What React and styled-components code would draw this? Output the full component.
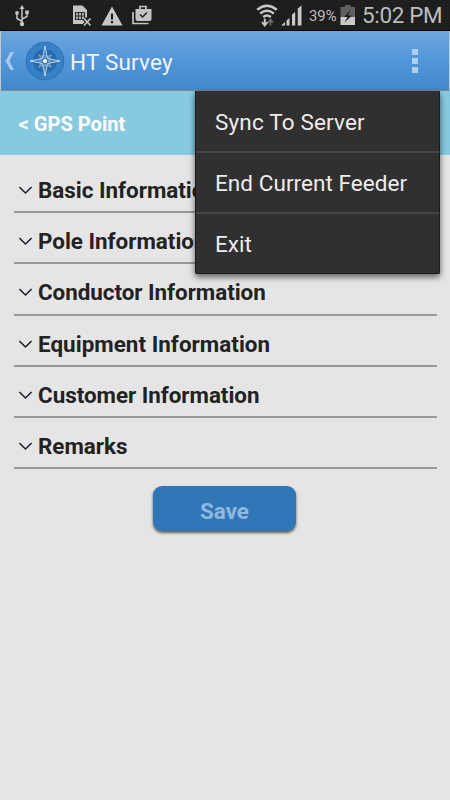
import styled, { createGlobalStyle } from 'styled-components';

const sections = [
  { title: 'Basic Information', spacing: '0px' },
  { title: 'Pole Information', spacing: '0px' },
  { title: 'Conductor Information', spacing: '-0.03px' },
  { title: 'Equipment Information', spacing: '0.04px' },
  { title: 'Customer Information', spacing: '-0.02px' },
  { title: 'Remarks', spacing: '0px' },
];

const menuItems = [
  { label: 'Sync To Server', spacing: '0.16px' },
  { label: 'End Current Feeder', spacing: '0.06px' },
  { label: 'Exit', spacing: '0px' },
];

function UsbIcon() {
  return (
    <svg width="16" height="24" viewBox="0 0 16 24" fill="none" stroke="#c4c4c4" strokeWidth="1.5">
      <path d="M8 4v15M8 17.5L3 14.500V10M8 15l5-2.500V9" />
      <path d="M8 1L10.500 5H5.500z" fill="#c4c4c4" stroke="none" />
      <circle cx="8" cy="20" r="2.200" fill="#c4c4c4" stroke="none" />
      <circle cx="3" cy="9" r="1.900" fill="#c4c4c4" stroke="none" />
      <rect x="11.200" y="6.500" width="3.600" height="3.600" fill="#c4c4c4" stroke="none" />
    </svg>
  );
}

function SimIcon() {
  return (
    <svg width="20" height="22" viewBox="0 0 20 22">
      <path d="M1 .5h9.500l4.500 4.500v7l-3 3 1 4H1z" fill="#c4c4c4" />
      <path d="M3.500 7.500h9v7h-9zM3.500 11h9M6.500 7.500v7M9.500 7.500v7" fill="none" stroke="#2a2a2a" strokeWidth="1.200" />
      <path d="M12 13.500l6.500 7M18.500 13.500l-6.500 7" stroke="#1e1e1e" strokeWidth="4" />
      <path d="M12 13.500l6.500 7M18.500 13.500l-6.500 7" stroke="#c4c4c4" strokeWidth="1.700" />
    </svg>
  );
}

function WarningIcon() {
  return (
    <svg width="22" height="20" viewBox="0 0 22 20">
      <path d="M11 .5L21.500 19.500H.5z" fill="#c8c8c8" />
      <path d="M11 7.500v6M11 15v2.300" stroke="#1e1e1e" strokeWidth="2.200" />
    </svg>
  );
}

function BagIcon() {
  return (
    <svg width="20" height="20" viewBox="0 0 20 20">
      <path d="M1 7v11.500h15.500" fill="none" stroke="#c4c4c4" strokeWidth="1.700" />
      <path d="M3.500 4h16v10q0 2-2 2h-12q-2 0-2-2z" fill="#c4c4c4" />
      <path d="M8 4.500V1.500h6v3" fill="none" stroke="#c4c4c4" strokeWidth="1.700" />
      <path d="M8 9.500l2.500 2.500L15 7.500" fill="none" stroke="#222" strokeWidth="1.500" />
    </svg>
  );
}

function WifiIcon() {
  return (
    <svg width="22" height="24" viewBox="0 0 22 24" fill="none" stroke="#c8c8c8" strokeWidth="2.400">
      <path d="M1.200 5.800Q11-2.200 20.800 5.800M4.200 9.500Q11 4 17.800 9.500M7.200 13Q11 9.800 14.800 13" />
      <path d="M8.800 14.500v6M6 18l2.800 3.500 2.800-3.500" strokeWidth="1.900" />
      <path d="M14.500 21.500v-6M12 18.500l2.500-3 2.500 3" stroke="#6b6b6b" strokeWidth="1.700" />
    </svg>
  );
}

function SignalIcon() {
  return (
    <svg width="21" height="21" viewBox="0 0 21 21" fill="#c8c8c8">
      <path d="M0 20.500L4 17v3.500zM5.500 15.500L8.500 13v7.500h-3zM11 9.500L14.200 7v13.500H11zM16.800 3.500L20.500 .5v20h-3.700z" />
    </svg>
  );
}

function BatteryIcon() {
  return (
    <svg width="16" height="21" viewBox="0 0 16 21">
      <path d="M5 0h5.500v2H15v10H.5V2H5z" fill="#606060" />
      <path d="M.5 12H15v8H.5z" fill="#c9c9c9" />
      <path d="M10.500 5L4 12h3.500L4.500 17.500 12 10.500H8z" fill="#1e1e1e" />
    </svg>
  );
}

function CompassLogo() {
  return (
    <svg width="40" height="40" viewBox="0 0 40 40">
      <circle cx="20" cy="20" r="18.800" fill="#3680c7" stroke="#2c70b1" strokeWidth="1" />
      <circle cx="20" cy="20" r="12" fill="#286ba8" />
      <g fill="none" stroke="#c3dbef" strokeWidth=".9">
        <circle cx="20" cy="20" r="5.500" opacity=".35" />
        <path d="M20 5l2.500 12.500L35 20l-12.500 2.500L20 35l-2.500-12.500L5 20l12.500-2.500z" />
        <path d="M20 5v30M5 20h30" opacity=".45" />
        <path d="M13.500 13.500l13 13M26.500 13.500l-13 13" opacity=".4" />
        <path d="M14 14l6 2.500 6-2.500-2.500 6 2.500 6-6-2.500-6 2.500 2.500-6z" opacity=".5" />
      </g>
      <circle cx="20" cy="20" r="2" fill="#fff" />
    </svg>
  );
}

function App() {
  return (
    <>
      <GlobalStyle />
      <StScreen>
        <StStatusBar>
          <StStatusIcon $left={14} $top={4}><UsbIcon /></StStatusIcon>
          <StStatusIcon $left={42} $top={5}><SimIcon /></StStatusIcon>
          <StStatusIcon $left={9} $top={6}><WarningIcon /></StStatusIcon>
          <StStatusIcon $left={9} $top={5}><BagIcon /></StStatusIcon>
          <StStatusIcon $left={104} $top={4}><WifiIcon /></StStatusIcon>
          <StStatusIcon $left={3} $top={5}><SignalIcon /></StStatusIcon>
          <StBattery>39%</StBattery>
          <StStatusIcon $left={4} $top={5}><BatteryIcon /></StStatusIcon>
          <StClock>5:02 PM</StClock>
        </StStatusBar>
        <StHeader>
          <StBack width="10" height="20" viewBox="0 0 10 20">
            <path d="M5.500 1h3.300L4.500 10l4.300 9H5.500L.5 10z" fill="#a9cced" />
          </StBack>
          <CompassLogo />
          <StTitle>HT Survey</StTitle>
          <StOverflow>
            <StDot />
            <StDot />
            <StDot />
          </StOverflow>
          <StMenu>
            {menuItems.map((item) => (
              <StMenuItem key={item.label} $spacing={item.spacing}>{item.label}</StMenuItem>
            ))}
          </StMenu>
        </StHeader>
        <StBanner>&lt; GPS Point</StBanner>
        <StSections>
          {sections.map((section) => (
            <StSection key={section.title} $spacing={section.spacing}>
              <StChevron width="14" height="9" viewBox="0 0 14 9">
                <path d="M.4 1L6.500 7l6.100-6" />
              </StChevron>
              <span>{section.title}</span>
            </StSection>
          ))}
        </StSections>
        <StSaveBtn>Save</StSaveBtn>
      </StScreen>
    </>
  );
}

export default App;

const GlobalStyle = createGlobalStyle`
  * {
    box-sizing: border-box;
  }
  body {
    margin: 0;
    background: #e5e5e5;
    font-family: Roboto, sans-serif;
  }
  svg {
    display: block;
    flex-shrink: 0;
  }
`;
const StScreen = styled.div`
  width: 450px;
  height: 800px;
  display: flex;
  flex-direction: column;
  overflow: hidden;
  background: #e5e5e5;
`;
const StStatusBar = styled.div`
  height: 31px;
  flex-shrink: 0;
  display: flex;
  align-items: flex-start;
  background: #1e1e1e;
  border-bottom: 1px solid #080808;
  color: #bdbdbd;
  white-space: nowrap;
`;
const StStatusIcon = styled.div`
  margin-left: ${({ $left }) => $left}px;
  margin-top: ${({ $top }) => $top}px;
`;
const StBattery = styled.span`
  width: 27px;
  margin-left: 7px;
  font-size: 14.800px;
  line-height: 33px;
`;
const StClock = styled.span`
  margin-left: 6px;
  font-size: 22.400px;
  line-height: 31px;
  letter-spacing: -0.300px;
`;
const StHeader = styled.header`
  position: relative;
  height: 60px;
  flex-shrink: 0;
  display: flex;
  align-items: center;
  padding: 0 1px 0 4px;
  background: linear-gradient(#70a5de, #4f95d8 55%, #4289cb);
  border-left: 1px solid #c8c8c8;
  border-right: 1px solid #c8c8c8;
  border-bottom: 1px solid #858585;
`;
const StBack = styled.svg`
  margin-right: 10px;
`;
const StTitle = styled.h1`
  flex: 1;
  margin: 3px 0 0 5px;
  font-size: 22.500px;
  font-weight: 400;
  letter-spacing: 0.200px;
  color: #f0f5fb;
`;
const StOverflow = styled.div`
  display: flex;
  flex-direction: column;
  gap: 3px;
  margin: 1px 30px 0 0;
`;
const StDot = styled.div`
  width: 6px;
  height: 6px;
  background: #b0d0ee;
`;
const StMenu = styled.div`
  position: absolute;
  top: 60px;
  left: 194px;
  width: 245px;
  background: #303030;
  border: 1px solid #1c1c1c;
  border-top: 0;
  border-radius: 0 0 2px 2px;
  box-shadow: 0 3px 6px rgba(0, 0, 0, 0.6);
`;
const StMenuItem = styled.div`
  height: 60px;
  padding-left: 19px;
  font-size: 22.500px;
  line-height: 62px;
  letter-spacing: ${({ $spacing }) => $spacing};
  color: #ececec;
  white-space: nowrap;

  & + & {
    height: 61px;
    border-top: 2px solid #454545;
    line-height: 60px;
  }
`;
const StBanner = styled.div`
  height: 64px;
  flex-shrink: 0;
  padding-left: 18.500px;
  background: #87cae0;
  font-size: 20.100px;
  font-weight: 700;
  line-height: 67px;
  color: #fff;
`;
const StSections = styled.div`
  display: flex;
  flex-direction: column;
  flex-shrink: 0;
  padding: 6.700px 13px 0 14px;
`;
const StSection = styled.div`
  height: 51.300px;
  display: flex;
  align-items: center;
  gap: 5px;
  padding: 7px 0 0 5px;
  border-bottom: 2px solid #98989b;
  font-size: 22.400px;
  font-weight: 700;
  letter-spacing: ${({ $spacing }) => $spacing};
  color: #222;
  white-space: nowrap;
`;
const StChevron = styled.svg`
  margin-top: 1px;
  fill: none;
  stroke: #1c1f2b;
  stroke-width: 1.500;
`;
const StSaveBtn = styled.button`
  width: 143px;
  height: 45px;
  flex-shrink: 0;
  margin: 17px 0 0 153px;
  padding: 5px 0 0;
  border: 0;
  border-radius: 9px;
  background: #2f76b7;
  box-shadow: 0 2px 3px rgba(0, 0, 0, 0.6);
  font-family: inherit;
  font-size: 22.400px;
  font-weight: 700;
  color: #8fb9e0;
`;
